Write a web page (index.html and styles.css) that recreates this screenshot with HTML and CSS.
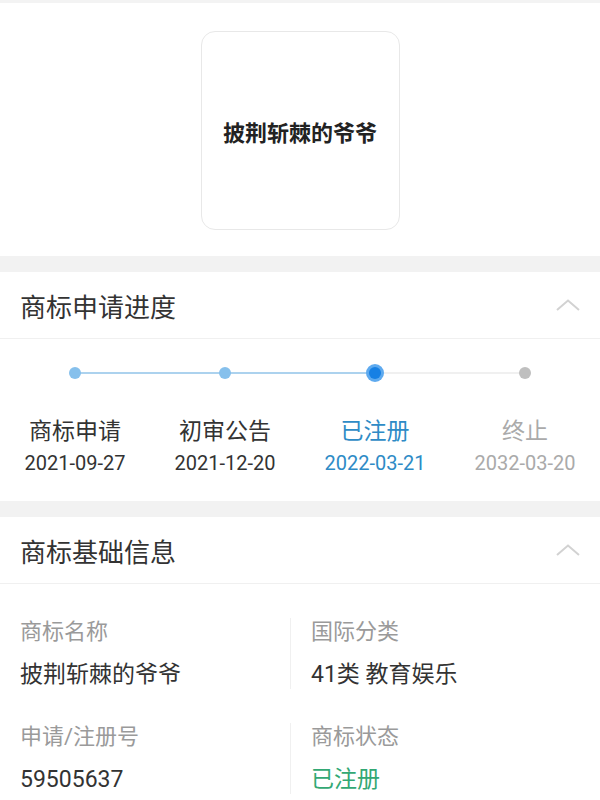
FILE: index.html
```html
<!DOCTYPE html>
<html lang="zh-CN">
<head>
    <meta charset="UTF-8">
    <meta name="viewport" content="width=device-width, initial-scale=1.0">
    <title>商标详情</title>
    <link rel="stylesheet" href="styles.css">
</head>
<body>
    <div class="logo-area">
        <div class="logo-box">披荆斩棘的爷爷</div>
    </div>

    <div class="gap"></div>

    <div class="panel">
        <div class="panel-head">
            <h2>商标申请进度</h2>
            <svg class="chevron" width="24" height="12" viewBox="0 0 24 12"><polyline points="1,11 12,1.5 23,11" fill="none" stroke="#d2d2d2" stroke-width="2"/></svg>
        </div>
        <div class="steps">
            <div class="step done">
                <div class="dot-row"><span class="dot"></span></div>
                <div class="step-name">商标申请</div>
                <div class="step-date">2021-09-27</div>
            </div>
            <div class="step done">
                <div class="dot-row"><span class="dot"></span></div>
                <div class="step-name">初审公告</div>
                <div class="step-date">2021-12-20</div>
            </div>
            <div class="step current">
                <div class="dot-row"><span class="dot"></span></div>
                <div class="step-name">已注册</div>
                <div class="step-date">2022-03-21</div>
            </div>
            <div class="step todo">
                <div class="dot-row"><span class="dot"></span></div>
                <div class="step-name">终止</div>
                <div class="step-date">2032-03-20</div>
            </div>
        </div>
    </div>

    <div class="gap"></div>

    <div class="panel">
        <div class="panel-head">
            <h2>商标基础信息</h2>
            <svg class="chevron" width="24" height="12" viewBox="0 0 24 12"><polyline points="1,11 12,1.5 23,11" fill="none" stroke="#d2d2d2" stroke-width="2"/></svg>
        </div>
        <div class="info">
            <div class="cell">
                <div class="label">商标名称</div>
                <div class="value">披荆斩棘的爷爷</div>
            </div>
            <div class="cell right">
                <div class="label">国际分类</div>
                <div class="value">41类 教育娱乐</div>
            </div>
            <div class="cell">
                <div class="label">申请/注册号</div>
                <div class="value">59505637</div>
            </div>
            <div class="cell right">
                <div class="label">商标状态</div>
                <div class="value ok">已注册</div>
            </div>
        </div>
    </div>
</body>
</html>
```

FILE: styles.css
```css
body { margin: 0; border-top: 3px solid #f3f3f3; background: #fff; color: #333; font-family: Roboto, "Noto Sans CJK SC", sans-serif; }
h2 { margin: 0; font-weight: 400; }

.logo-area { display: flex; justify-content: center; padding: 28px 0 26px; }
.logo-box { width: 197px; height: 197px; border: 1.5px solid #e8e8e8; border-radius: 14px; display: flex; align-items: center; justify-content: center; font-size: 22px; font-weight: 700; color: #222; }

.gap { height: 16px; background: #f2f2f2; }

.panel-head { height: 66px; display: flex; align-items: center; justify-content: space-between; padding: 0 20px; border-bottom: 1px solid #f0f0f0; }
.panel-head h2 { font-size: 26px; color: #333; }
.chevron { display: block; }

.steps { display: grid; grid-template-columns: repeat(4, 1fr); padding: 28px 0 22px; text-align: center; }
.step { position: relative; }
.step:not(:last-child)::after { content: ""; position: absolute; top: 5px; left: 50%; width: 100%; height: 1.5px; background: #f0f0f0; }
.step.done::after { background: #acd2ee; }
.dot-row { height: 12px; display: flex; align-items: center; justify-content: center; position: relative; z-index: 1; }
.dot { width: 12px; height: 12px; border-radius: 50%; background: #86c0ec; }
.current .dot { background: #1680e4; box-shadow: 0 0 0 3px #5eaaef; }
.todo .dot { background: #bfbfbf; }
.step-name { margin-top: 37px; font-size: 23px; line-height: 32px; color: #333; }
.step-date { font-size: 20px; line-height: 31px; color: #333; }
.current .step-name, .current .step-date { color: #2e8bc6; }
.todo .step-name, .todo .step-date { color: #aaa; }

.info { display: grid; grid-template-columns: 290px 1fr; row-gap: 34px; padding: 34px 0 20px; }
.cell { padding-left: 20px; }
.cell.right { border-left: 1px solid #f0f0f0; }
.label { font-size: 22px; line-height: 28px; color: #9a9a9a; }
.value { margin-top: 15px; font-size: 23px; line-height: 28px; color: #333; }
.value.ok { color: #33a874; }
```
